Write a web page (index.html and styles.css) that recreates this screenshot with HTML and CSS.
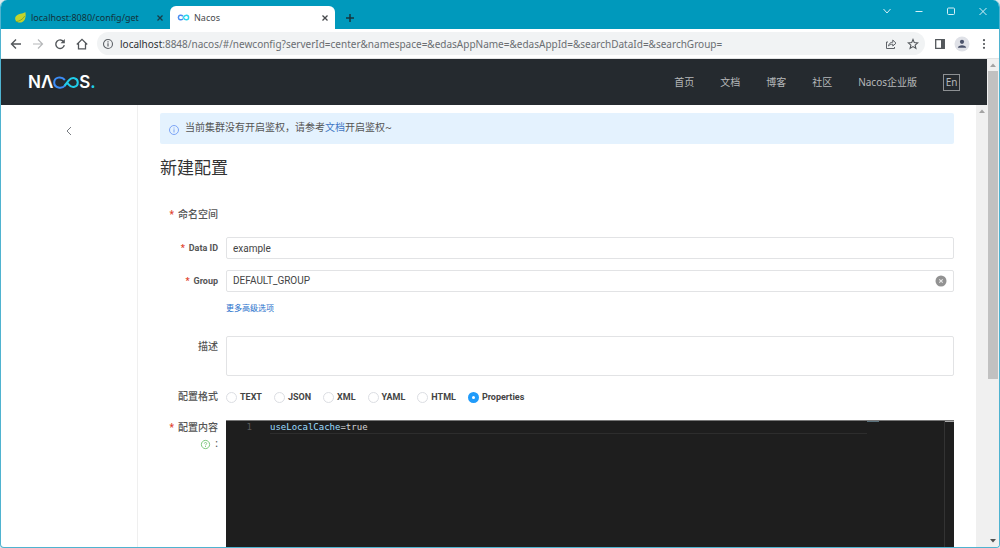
FILE: index.html
```html
<!DOCTYPE html>
<html lang="zh-CN">
<head>
<meta charset="utf-8">
<title>Nacos</title>
<link rel="stylesheet" href="styles.css">
</head>
<body>
<div class="window">
  <div class="tabs">
    <div class="tab">
      <svg class="favicon" viewBox="0 0 14 14"><path d="M12.2 1C11 3 3 2.500 1.500 6.500C.5 9.500 2.500 12.500 6 12.500C11.500 12.500 13.500 7 12.200 1Z" fill="#c3d42c"/><path d="M2 11.500C6 11 9.500 9 11.500 5.500" fill="none" stroke="#7da52c"/></svg>
      <span class="tab-title">localhost:8080/config/get</span>
      <button class="tab-close" aria-label="关闭标签页"><svg viewBox="0 0 8 8"><path d="M1.500 1.500l5 5M6.500 1.500l-5 5" fill="none" stroke="#173c47" stroke-width="1.300"/></svg></button>
    </div>
    <div class="tab tab-active">
      <svg class="favicon" viewBox="0 0 14 14"><path d="M6.500 8.300C4.500 10.300 1.500 9.500 1.500 7S4.500 3.700 6.500 5.700" fill="none" stroke="#4a8df0" stroke-width="1.600"/><path d="M6.800 7C8.500 3.500 12.500 3.800 12.500 7S8.500 10.500 6.800 7Z" fill="none" stroke="#28d5ee" stroke-width="1.600"/></svg>
      <span class="tab-title">Nacos</span>
      <button class="tab-close" aria-label="关闭标签页"><svg viewBox="0 0 8 8"><path d="M1.500 1.500l5 5M6.500 1.500l-5 5" fill="none" stroke="#45484b" stroke-width="1.300"/></svg></button>
    </div>
    <button class="tab-new" aria-label="新标签页"><svg viewBox="0 0 10 10"><path d="M5 1v8M1 5h8" stroke="#17343d" stroke-width="1.500"/></svg></button>
    <div class="window-buttons">
      <button aria-label="搜索标签页"><svg viewBox="0 0 10 10"><path d="M1.500 3L5 7l3.500-4"/></svg></button>
      <button aria-label="最小化"><svg viewBox="0 0 10 10"><path d="M1.500 5.500h7"/></svg></button>
      <button aria-label="最大化"><svg viewBox="0 0 10 10"><rect x="1.500" y="2" width="7" height="6.500" rx="1"/></svg></button>
      <button aria-label="关闭"><svg viewBox="0 0 10 10"><path d="M1.500 2l7 7M8.500 2l-7 7"/></svg></button>
    </div>
  </div>

  <div class="toolbar">
    <button class="tool" aria-label="后退"><svg viewBox="0 0 12 12"><path d="M11 6H1.500M6 1.500L1.500 6L6 10.500" fill="none" stroke="#53575b" stroke-width="1.400"/></svg></button>
    <button class="tool" aria-label="前进"><svg viewBox="0 0 12 12"><path d="M1 6h9.500M6 1.500L10.500 6L6 10.500" fill="none" stroke="#b6b8ba" stroke-width="1.200"/></svg></button>
    <button class="tool" aria-label="重新加载"><svg viewBox="0 0 12 12"><path d="M9.800 4A4.300 4.300 0 1 0 10.300 7.200" fill="none" stroke="#53575b" stroke-width="1.400"/><path d="M10.800 1v4.300H6.500Z" fill="#53575b"/></svg></button>
    <button class="tool" aria-label="主页"><svg viewBox="0 0 12 12"><path d="M.8 6.500L6 1.300l5.200 5.200M2.500 5.500v5.300h7V5.500" fill="none" stroke="#53575b" stroke-width="1.300"/></svg></button>
    <div class="address">
      <svg class="icon-info" viewBox="0 0 12 12"><circle cx="6" cy="6" r="4.500" fill="none" stroke="#5f6368" stroke-width="1.100"/><path d="M6 5.300v3.200M6 3.300v1.200" stroke="#5f6368" stroke-width="1.200"/></svg>
      <div class="url"><b>localhost</b>:8848/nacos/#/newconfig?serverId=center&amp;namespace=&amp;edasAppName=&amp;edasAppId=&amp;searchDataId=&amp;searchGroup=</div>
      <button class="tool" aria-label="分享"><svg viewBox="0 0 12 12"><path d="M3 4H1.500v6.500h8V9M3.500 8C4 5.500 5.500 4.300 7.800 4.200V2L11 5.200L7.800 8V6.200C5.800 6.200 4.500 6.800 3.500 8Z" fill="none" stroke="#5f6368"/></svg></button>
      <button class="tool" aria-label="收藏"><svg viewBox="0 0 12 12"><path d="M6 1.500L7.300 4.600L10.700 4.900L8.100 7.100L8.900 10.400L6 8.600L3.100 10.400L3.900 7.100L1.300 4.900L4.700 4.600Z" fill="none" stroke="#53575b" stroke-width="1.100"/></svg></button>
    </div>
    <button class="tool" aria-label="侧边栏"><svg viewBox="0 0 12 12"><path d="M1.700 1.700h8.600v8.600H1.700z" fill="none" stroke="#53575b" stroke-width="1.300"/><path d="M7 1.700h3.500v8.600H7z" fill="#53575b"/></svg></button>
    <button class="tool tool-user" aria-label="用户"><svg viewBox="0 0 16 16"><circle cx="8" cy="8" r="7.500" fill="#dfe1e7"/><circle cx="8" cy="5.800" r="2.100" fill="#4b536b"/><path d="M3.800 11.700C4 8.300 12 8.300 12.200 11.700Z" fill="#4b536b"/></svg></button>
    <button class="tool" aria-label="菜单"><svg viewBox="0 0 12 12"><g fill="#53575b"><circle cx="6" cy="2.200" r="1.100"/><circle cx="6" cy="6" r="1.100"/><circle cx="6" cy="9.800" r="1.100"/></g></svg></button>
  </div>

  <div class="viewport">
    <div class="page">
      <header class="header">
        <a class="logo" href="#" aria-label="NACOS"><span>N</span><span>Λ</span><svg viewBox="0 0 28 14"><path d="M13.300 9.800C9.500 14.500 1.300 12.800 1.300 7S9 -.3 12.800 4.300" fill="none" stroke="#3c8cf5" stroke-width="2.200"/><path d="M12.500 10.500L17 4.700C20.500 .3 26.700 2 26.700 7S20.500 13.700 17 9.300L15 7" fill="none" stroke="#20cdea" stroke-width="2.200"/></svg><span>S</span><span class="logo-dot">.</span></a>
        <nav class="nav">
          <a href="#">首页</a><a href="#">文档</a><a href="#">博客</a><a href="#">社区</a><a href="#">Nacos企业版</a>
          <button class="lang">En</button>
        </nav>
      </header>
      <div class="body">
        <aside class="side"><button aria-label="返回"><svg viewBox="0 0 8 10"><path d="M6 1L2 5l4 4" fill="none" stroke="#777b80"/></svg></button></aside>
        <main class="main">
          <div class="alert">
            <svg viewBox="0 0 12 12"><circle cx="6" cy="6" r="4.500" fill="none" stroke="#7ca4f5"/><path d="M6 5.300v3.200M6 3.500v1" stroke="#7ca4f5"/></svg>
            <p>当前集群没有开启鉴权，请参考<a href="#">文档</a>开启鉴权~</p>
          </div>
          <h1>新建配置</h1>
          <form class="form">
            <span class="label required">命名空间</span><span></span>
            <label class="label label-latin required" for="dataid">Data ID</label>
            <input class="field" id="dataid" value="example">
            <label class="label label-latin required" for="group">Group</label>
            <div class="field field-clear">
              <input id="group" value="DEFAULT_GROUP">
              <button type="button" aria-label="清除"><svg viewBox="0 0 12 12"><circle cx="6" cy="6" r="5.500" fill="#929292"/><path d="M4.300 4.300l3.400 3.400M7.700 4.300L4.300 7.700" stroke="#e8e8e8" stroke-width="1.100"/></svg></button>
            </div>
            <span></span><a class="more" href="#">更多高级选项</a>
            <label class="label label-desc" for="desc">描述</label>
            <textarea class="area" id="desc"></textarea>
            <span class="label" id="format">配置格式</span>
            <div class="radios" role="radiogroup" aria-labelledby="format">
              <label><input type="radio" name="format">TEXT</label>
              <label><input type="radio" name="format">JSON</label>
              <label><input type="radio" name="format">XML</label>
              <label><input type="radio" name="format">YAML</label>
              <label><input type="radio" name="format">HTML</label>
              <label><input type="radio" name="format" checked>Properties</label>
            </div>
            <div class="label label-content"><span class="required">配置内容</span><div class="help"><svg viewBox="0 0 12 12"><circle cx="6" cy="6" r="4.500" fill="none" stroke="#72c472"/><path d="M4.700 5C4.700 3.400 7.300 3.400 7.300 5C7.300 5.900 6 5.900 6 7M6 7.700v1" fill="none" stroke="#72c472"/></svg>:</div></div>
            <div class="editor">
              <span class="line-number">1</span>
              <code class="code"><span>useLocalCache</span>=true</code>
              <div class="minimap"></div>
              <div class="ruler"></div>
            </div>
          </form>
        </main>
        <div class="scroll scroll-inner"><svg viewBox="0 0 8 6"><path d="M1 5l3-3.500L7 5Z" fill="#a3a3a3"/></svg></div>
      </div>
    </div>
    <div class="scroll">
      <svg viewBox="0 0 8 6"><path d="M1 5l3-3.500L7 5Z" fill="#a3a3a3"/></svg>
      <div class="thumb"></div>
      <svg viewBox="0 0 8 6"><path d="M1 1l3 3.500L7 1Z" fill="#505050"/></svg>
    </div>
  </div>
</div>
</body>
</html>
```
FILE: styles.css
```css
* { box-sizing: border-box; }
body {
  margin: 0;
  background: #dfe9ec;
  font-family: Roboto, "Noto Sans CJK SC", sans-serif;
  font-size: 10px;
  line-height: 16px;
  color: #444;
}
button { padding: 0; border: 0; background: none; font: inherit; color: inherit; display: flex; align-items: center; justify-content: center; }
input, textarea { font: inherit; color: inherit; margin: 0; outline: 0; }
a { text-decoration: none; }
svg { display: block; flex: none; }

.window {
  height: 100vh;
  display: flex;
  flex-direction: column;
  border: 1px solid #4fb3d0;
  border-top: 0;
  border-radius: 7px 7px 4px 4px;
  overflow: hidden;
  background: #fff;
}
.tabs {
  flex: none;
  height: 29px;
  padding: 6px 0 0 4px;
  display: flex;
  background: #0099bc;
  font-family: "Noto Sans", sans-serif;
  font-size: 9px;
  color: #12323b;
}
.tab { width: 165px; height: 23px; padding: 0 6px 0 9px; display: flex; align-items: center; gap: 4px; }
.tab-active { background: #fff; border-radius: 6px 6px 0 0; color: #45484b; padding-left: 7px; }
.favicon { width: 13px; height: 13px; }
.tab-title { flex: 1; white-space: nowrap; }
.tab-close svg { width: 8px; height: 8px; }
.tab-new { width: 30px; height: 23px; }
.tab-new svg { width: 10px; height: 10px; }
.window-buttons { margin-left: auto; margin-top: -6px; display: flex; }
.window-buttons button { width: 32px; height: 21px; }
.window-buttons svg { width: 10px; height: 10px; fill: none; stroke: #d5eff6; }

.toolbar { flex: none; height: 30px; padding: 0 8px; display: flex; align-items: center; gap: 8px; border-bottom: 1px solid #e2e3e4; }
.tool { width: 14px; height: 22px; }
.tool svg { width: 12px; height: 12px; }
.tool-user svg { width: 16px; height: 16px; }
.address { flex: 1; height: 23px; padding: 0 5px; border-radius: 12px; background: #f1f3f4; display: flex; align-items: center; gap: 8px; }
.icon-info { width: 12px; height: 12px; margin-right: -2px; }
.url { flex: 1; min-width: 0; overflow: hidden; white-space: nowrap; font: 10px/16px "Noto Sans", sans-serif; color: #6a6e72; }
.url b { font-weight: 400; color: #2e3134; }

.viewport { flex: 1; min-height: 0; display: flex; }
.page { flex: 1; min-width: 0; display: flex; flex-direction: column; }
.header { flex: none; height: 46px; padding: 0 27px; display: flex; align-items: center; justify-content: space-between; background: #252a2f; }
.logo { display: flex; align-items: center; color: #fff; font: 600 17px/20px Inter, sans-serif; }
.logo svg { width: 26px; height: 13px; }
.logo-dot { color: #20cdea; }
.nav { display: flex; align-items: center; gap: 26px; font-family: "Noto Sans", "Noto Sans CJK SC", sans-serif; color: #b6b8ba; }
.nav a { color: inherit; }
.lang { width: 17px; height: 17px; border: 1px solid #8d9093; }

.body { flex: 1; min-height: 0; display: flex; }
.side { flex: none; width: 137px; border-right: 1px solid #efefef; padding-top: 21px; }
.side button { width: 100%; }
.side svg { width: 8px; height: 10px; }
.main { flex: 1; min-width: 0; padding: 8px 22px 0; overflow: hidden; }
.alert { height: 31px; padding: 0 8px; display: flex; align-items: center; gap: 5px; background: #e4f2fe; border-radius: 2px; color: #555; }
.alert svg { width: 12px; height: 12px; margin-top: 2px; }
.alert p { margin: 0 0 2px; }
.alert a { color: #3e76c4; }
h1 { margin: 12px 0 24px; font-size: 17px; line-height: 24px; font-weight: 400; color: #333; }

.form { display: grid; grid-template-columns: 58px minmax(0, 1fr); column-gap: 8px; }
.label { text-align: right; font-weight: 500; color: #555; line-height: 22px; height: 33px; }
.label-latin { font-size: 9px; font-weight: 700; }
.required::before { content: "*"; color: #e0412c; margin-right: 4px; }
.field { height: 22px; padding: 0 6px; border: 1px solid #e2e3e5; border-radius: 2px; background: #fff; }
.field-clear { display: flex; align-items: center; }
.field-clear input { flex: 1; min-width: 0; padding: 0; border: 0; background: none; }
.field-clear svg { width: 12px; height: 12px; }
.more { height: 33px; line-height: 12px; font-size: 8px; color: #1f71cc; }
.label-desc { height: 50px; }
.area { height: 40px; padding: 4px 6px; border: 1px solid #e2e3e5; border-radius: 2px; resize: none; }
.radios { display: flex; gap: 12px; height: 22px; margin-bottom: 12px; align-items: center; font-size: 9px; font-weight: 700; }
.radios label { display: flex; align-items: center; gap: 3px; }
.radios input { appearance: none; width: 11px; height: 11px; border: 1px solid #dcdee3; border-radius: 50%; background: #fff; }
.radios input:checked { border: 4px solid #209bfa; }
.label-content { height: auto; line-height: 16px; }
.help { display: flex; justify-content: flex-end; align-items: center; gap: 4px; }
.help svg { width: 11px; height: 11px; }

.editor { height: 200px; display: flex; background: #1e1e1e; border-top: 1px solid #777; font: 9px/12px "DejaVu Sans Mono", monospace; }
.line-number { width: 44px; padding-right: 18px; text-align: right; color: #5a5a5a; }
.code { flex: 1; height: 13px; border-bottom: 1px solid #2d2d2d; font: inherit; color: #d4d4d4; }
.code span { color: #9cdcfe; }
.minimap { width: 78px; border-right: 1px solid #333; }
.minimap::before { content: ""; display: block; width: 12px; height: 1px; background: #58707b; }
.ruler { width: 9px; border-top: 1px solid #aaa; }

.scroll { flex: none; width: 12px; padding: 3px 1px; display: flex; flex-direction: column; align-items: center; background: #f0f0f0; }
.scroll-inner { width: 11px; }
.scroll svg { width: 8px; height: 6px; }
.thumb { width: 100%; height: 64%; margin: 3px 0 auto; background: #c1c1c1; }
```
